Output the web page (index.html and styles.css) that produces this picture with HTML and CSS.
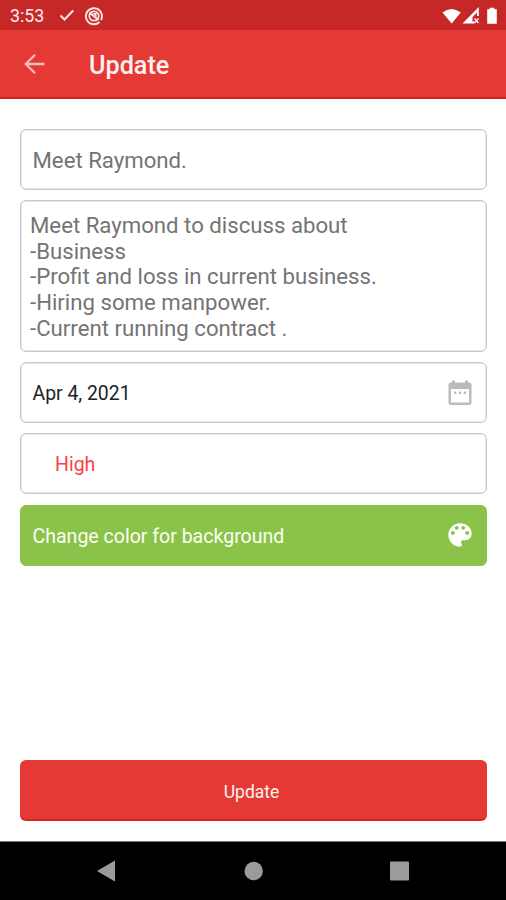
FILE: index.html
```html
<!DOCTYPE html>
<html lang="en">
<head>
<meta charset="utf-8">
<title>Update</title>
<link rel="stylesheet" href="styles.css">
</head>
<body>
<div class="screen">
  <div class="status">
    <span class="clock">3:53</span>
    <svg class="check" width="16" height="14" viewBox="0 0 16 14"><path d="M1.500 7.500l4 4L14.200 2.500" fill="none" stroke="#fbe4e3" stroke-width="2"/></svg>
    <svg class="badge" width="20" height="20" viewBox="0 0 20 20" fill="none" stroke="#fbe4e3"><path d="M15.500 16A8 8 0 1 1 17 14" stroke-width="2"/><circle cx="10" cy="10" r="4.700" stroke-width="1.800"/><path d="M5.500 6.500l9 7.500" stroke-width="2.200"/><path d="M8.500 7h4v4z" fill="#fbe4e3" stroke="none"/></svg>
    <svg class="system" width="58" height="20" viewBox="0 0 58 20" fill="#fff"><path d="M.5 5.500Q9.500-1.500 18.800 5.500L9.700 16.500z"/><path fill-rule="evenodd" d="M20.500 16.500L36.800 0v9h-1.800V5.500L30.500 10v4.500h2v2z"/><path d="M32.500 11.500l4 4.500m0-4.500l-4 4.500" stroke="#fff" stroke-width="1.200"/><path d="M45.200 2.300h2.500V.700h4.600v1.600h2.500v14.500h-9.600z"/></svg>
  </div>
  <header class="appbar">
    <svg class="back" width="22" height="22" viewBox="0 0 22 22"><path d="M20.500 11H2M11 1.800L1.800 11l9.200 9.200" fill="none" stroke="#f9bcb9" stroke-width="2.300"/></svg>
    <h1 class="title">Update</h1>
  </header>
  <main class="form">
    <div class="field name">Meet Raymond.</div>
    <div class="field notes">Meet Raymond to discuss about<br>-Business<br>-Profit and loss in current business.<br>-Hiring some manpower.<br>-Current running contract .</div>
    <div class="field date"><span>Apr 4, 2021</span>
      <svg width="24" height="26" viewBox="0 0 24 26"><path fill="#bdb9b9" fill-rule="evenodd" d="M3 2.500h1V.500h3v2h10v-2h3v2h1a2.500 2.500 0 0 1 2.500 2.500v17.500A2.500 2.500 0 0 1 21 25H3A2.500 2.500 0 0 1 .5 22.500V5A2.500 2.500 0 0 1 3 2.500zM3 9v13.500h18V9z"/><path fill="#bdb9b9" d="M6 11.500h2.300v2.500H6zm4.900 0h2.300v2.500h-2.300zm4.900 0h2.300v2.500h-2.300z"/></svg>
    </div>
    <div class="field priority">High</div>
    <div class="field color"><span>Change color for background</span>
      <svg width="24" height="24" viewBox="2.750 2.750 18.500 18.500"><path fill="#fff" d="M12 3c-4.970 0-9 4.030-9 9s4.030 9 9 9c.83 0 1.500-.67 1.500-1.500 0-.39-.15-.74-.39-1.010-.23-.26-.38-.61-.38-.99 0-.83.67-1.500 1.500-1.500H16c2.760 0 5-2.240 5-5 0-4.420-4.030-8-9-8zm-5.500 9c-.83 0-1.500-.67-1.500-1.500S5.670 9 6.500 9 8 9.670 8 10.500 7.330 12 6.500 12zm3-4C8.670 8 8 7.330 8 6.500S8.670 5 9.500 5s1.500.67 1.500 1.500S10.330 8 9.500 8zm5 0c-.83 0-1.500-.67-1.500-1.500S13.670 5 14.500 5s1.500.67 1.500 1.500S15.330 8 14.500 8zm3 4c-.83 0-1.500-.67-1.500-1.500S16.670 9 17.500 9s1.500.67 1.500 1.500-.67 1.500-1.500 1.500z"/></svg>
    </div>
    <button class="submit">Update</button>
  </main>
  <nav class="nav">
    <svg width="506" height="58" viewBox="0 1 506 58" fill="#9b9b9b"><path d="M97 30L115 19.500v21z"/><circle cx="253.700" cy="30" r="9.200"/><rect x="390" y="20.500" width="19" height="19" rx="1"/></svg>
  </nav>
</div>
</body>
</html>
```
FILE: styles.css
```css
* { box-sizing: border-box; }
body { margin: 0; font-family: Roboto, "Liberation Sans", sans-serif; background: #fff; }
svg { display: block; flex: none; }
.screen { width: 506px; height: 900px; display: flex; flex-direction: column; overflow: hidden; }
.status { height: 30px; background: #c62828; display: flex; align-items: center; padding: 0 6px 0 10px; color: #fde9e8; }
.clock { font-size: 17.800px; width: 49px; line-height: 30px; padding-top: 2px; }
.badge { margin: 2px 0 0 9px; }
.system { margin-left: auto; margin-top: 4px; }
.appbar { height: 69px; background: #e53935; border-bottom: 2px solid #d3201f; display: flex; align-items: center; padding: 2px 24px 0; }
.back { margin-top: -1px; }
.title { margin: 3px 0 0 43px; font-size: 25.200px; font-weight: 500; line-height: 30px; color: #fff0ef; }
.form { flex: 1; display: flex; flex-direction: column; padding: 30px 19px 20px 20px; }
.field { height: 61px; margin-bottom: 10px; border: 1px solid #c9c7c8; box-shadow: inset 0 0 0 1px #e9e8e8; border-radius: 6px; display: flex; align-items: center; justify-content: space-between; padding: 1px 14px 0 11.500px; color: #747474; font-size: 22.200px; flex: none; }
.field.notes { height: 152px; display: block; padding: 12px 9px; line-height: 25.700px; }
.field.date { color: #222; font-size: 19.400px; }
.field.date svg { margin-top: -1px; }
.field.priority { color: #f5444a; padding: 2px 0 0 34px; font-size: 19.500px; margin-bottom: 11px; }
.field.color { background: #8bc34a; border-color: #8bc34a; box-shadow: none; color: #fbfff2; font-size: 19.550px; }
.field.color svg { margin-top: -2px; }
.submit { height: 61px; margin-top: auto; border: 0; border-bottom: 2px solid #d52422; border-radius: 6px; background: #e53935; color: #fff0ef; font: 17.500px Roboto, sans-serif; padding: 4px 4px 0 0; }
.nav { height: 59px; background: #000; border-top: 1px solid #777; }
```
